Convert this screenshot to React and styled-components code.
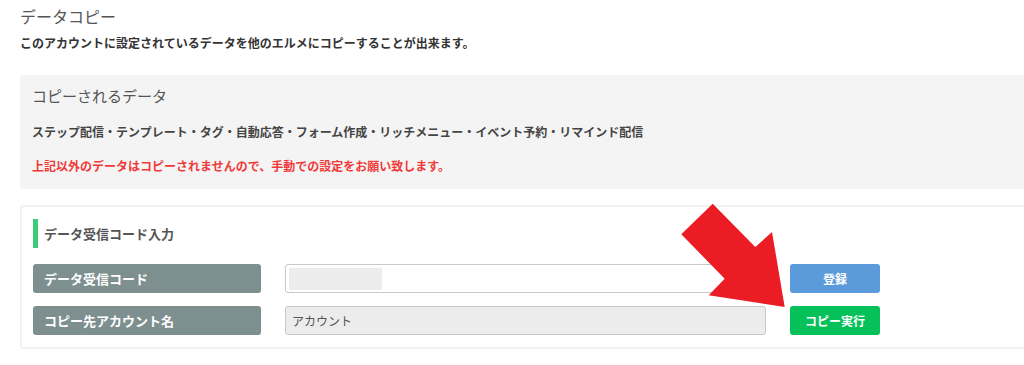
import React from "react";
import styled, { createGlobalStyle } from "styled-components";

const GlobalStyle = createGlobalStyle`
  body {
    margin: 0;
    background: #fff;
    overflow: hidden;
    font-family: "Noto Sans CJK JP", "Noto Sans", sans-serif;
  }
`;

const Page = styled.div`
  padding: 6px 0 0 20px;
  width: 1020px;
`;

const Title = styled.h1`
  margin: 0;
  font-size: 16px;
  line-height: 20px;
  font-weight: 400;
  color: #555;
`;

const Lead = styled.p`
  margin: 9px 0 0;
  font-size: 12px;
  line-height: 16px;
  font-weight: 700;
  color: #333;
`;

const InfoBox = styled.div`
  margin-top: 24px;
  background: #f4f4f4;
  border-radius: 3px;
  padding: 11px 12px 15px;
`;

const InfoHeading = styled.h2`
  margin: 0;
  font-size: 15px;
  line-height: 20px;
  font-weight: 400;
  color: #555;
`;

const InfoText = styled.p`
  margin: 18px 0 0;
  font-size: 12px;
  line-height: 16px;
  font-weight: 700;
  color: ${(p) => (p.$warn ? "#f03a3a" : "#444")};
`;

const Card = styled.div`
  position: relative;
  margin-top: 16px;
  border: 2px solid #f2f2f2;
  border-radius: 3px;
  padding: 12px 11px 12px;
`;

const CardHeading = styled.h3`
  margin: 0 0 16px;
  height: 29px;
  display: flex;
  align-items: center;
  border-left: 5px solid #3ccb79;
  padding-left: 6px;
  font-size: 13px;
  font-weight: 700;
  color: #555;
`;

const Rows = styled.div`
  display: grid;
  grid-template-columns: 228px 481px 90px;
  column-gap: 24px;
  row-gap: 13px;
`;

const Label = styled.div`
  height: 29px;
  display: flex;
  align-items: center;
  padding-left: 11px;
  background: #7e8f8f;
  border-radius: 3px;
  color: #fff;
  font-size: 13px;
  font-weight: 700;
`;

const Field = styled.div`
  box-sizing: border-box;
  height: 29px;
  display: flex;
  align-items: center;
  padding: 0 3px;
  border: 1px solid #c9c9c9;
  border-radius: 3px;
  background: ${(p) => (p.$readOnly ? "#ececec" : "#fff")};
  color: #555;
  font-size: 12px;
`;

const Masked = styled.span`
  display: block;
  width: 93px;
  height: 22px;
  background: #ececec;
`;

const FieldText = styled.span`
  padding-left: 3px;
`;

const Button = styled.button`
  height: 29px;
  border: none;
  border-radius: 3px;
  background: ${(p) => p.$bg};
  color: #fff;
  font-family: inherit;
  font-size: 12px;
  font-weight: 700;
  cursor: pointer;
`;

const Arrow = styled.svg`
  position: absolute;
  left: 655px;
  top: -7px;
  pointer-events: none;
`;

const App = () => {
  return (
    <Page>
      <GlobalStyle />
      <Title>データコピー</Title>
      <Lead>このアカウントに設定されているデータを他のエルメにコピーすることが出来ます。</Lead>

      <InfoBox>
        <InfoHeading>コピーされるデータ</InfoHeading>
        <InfoText>
          ステップ配信・テンプレート・タグ・自動応答・フォーム作成・リッチメニュー・イベント予約・リマインド配信
        </InfoText>
        <InfoText $warn>
          上記以外のデータはコピーされませんので、手動での設定をお願い致します。
        </InfoText>
      </InfoBox>

      <Card>
        <CardHeading>データ受信コード入力</CardHeading>
        <Rows>
          <Label>データ受信コード</Label>
          <Field>
            <Masked />
          </Field>
          <Button $bg="#5b9bdc">登録</Button>

          <Label>コピー先アカウント名</Label>
          <Field $readOnly>
            <FieldText>アカウント</FieldText>
          </Field>
          <Button $bg="#06c15a">コピー実行</Button>
        </Rows>
        <Arrow width="115" height="112" viewBox="0 0 115 112">
          <polygon
            points="35.7,3.7 4.3,34.3 47.7,78.7 31.7,95.3 107.7,107 95,32 78.3,47"
            fill="#ec1c24"
          />
        </Arrow>
      </Card>
    </Page>
  );
};

export default App;
